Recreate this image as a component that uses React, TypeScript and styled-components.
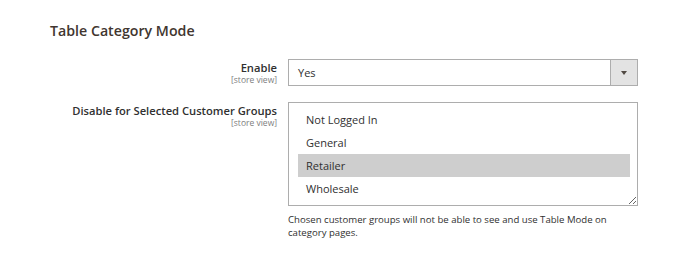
import React from 'react';
import styled, { createGlobalStyle } from 'styled-components';

const Global = createGlobalStyle`
  html, body { margin: 0; padding: 0; background: #fff; }
  body { font-family: 'Open Sans', 'Liberation Sans', sans-serif; color: #303030; }
`;

const Page = styled.div`
  padding: 21px 0 0 50px;
`;

const Title = styled.h2`
  margin: 0;
  font-size: 14.2px;
  line-height: 20px;
  font-weight: 600;
  color: #41362f;
`;

const Fieldset = styled.div`
  display: grid;
  grid-template-columns: 227px 350px;
  column-gap: 11px;
  row-gap: 16px;
  margin-top: 18px;
`;

const Label = styled.div`
  text-align: right;
  padding-top: 2px;
`;

const LabelText = styled.div`
  font-size: 11.2px;
  line-height: 14px;
  font-weight: 600;
  color: #303030;
`;

const Scope = styled.div`
  font-size: 8.5px;
  line-height: 10px;
  color: #808080;
`;

const Control = styled.div`
  display: flex;
  flex-direction: column;
`;

const SelectBox = styled.div`
  display: flex;
  height: 27px;
  box-sizing: border-box;
  border: 1px solid #adadad;
  background: #fff;
`;

const SelectValue = styled.div`
  flex: 1;
  padding-left: 9px;
  font-size: 11px;
  line-height: 25px;
  color: #303030;
`;

const SelectArrow = styled.div`
  width: 26px;
  border-left: 1px solid #adadad;
  background: #e3e3e3;
  display: flex;
  align-items: center;
  justify-content: center;
  &::after {
    content: '';
    border-left: 3px solid transparent;
    border-right: 3px solid transparent;
    border-top: 4px solid #514943;
  }
`;

const ListBox = styled.div`
  height: 104px;
  box-sizing: border-box;
  border: 1px solid #adadad;
  padding: 5px 7px 0 9px;
  overflow: auto;
  resize: vertical;
  background: #fff;
`;

const Option = styled.div<{ $selected?: boolean }>`
  height: 23px;
  line-height: 23px;
  padding-left: 8px;
  font-size: 11px;
  color: #303030;
  background: ${(p) => (p.$selected ? '#cecece' : 'transparent')};
`;

const Note = styled.div`
  margin-top: 7px;
  font-size: 9.6px;
  line-height: 13px;
  color: #303030;
`;

const groups = ['Not Logged In', 'General', 'Retailer', 'Wholesale'];

export default function App() {
  return (
    <Page>
      <Global />
      <Title>Table Category Mode</Title>
      <Fieldset>
        <Label>
          <LabelText>Enable</LabelText>
          <Scope>[store view]</Scope>
        </Label>
        <Control>
          <SelectBox>
            <SelectValue>Yes</SelectValue>
            <SelectArrow />
          </SelectBox>
        </Control>
        <Label>
          <LabelText>Disable for Selected Customer Groups</LabelText>
          <Scope>[store view]</Scope>
        </Label>
        <Control>
          <ListBox>
            {groups.map((g) => (
              <Option key={g} $selected={g === 'Retailer'}>
                {g}
              </Option>
            ))}
          </ListBox>
          <Note>
            Chosen customer groups will not be able to see and use Table Mode on category pages.
          </Note>
        </Control>
      </Fieldset>
    </Page>
  );
}
